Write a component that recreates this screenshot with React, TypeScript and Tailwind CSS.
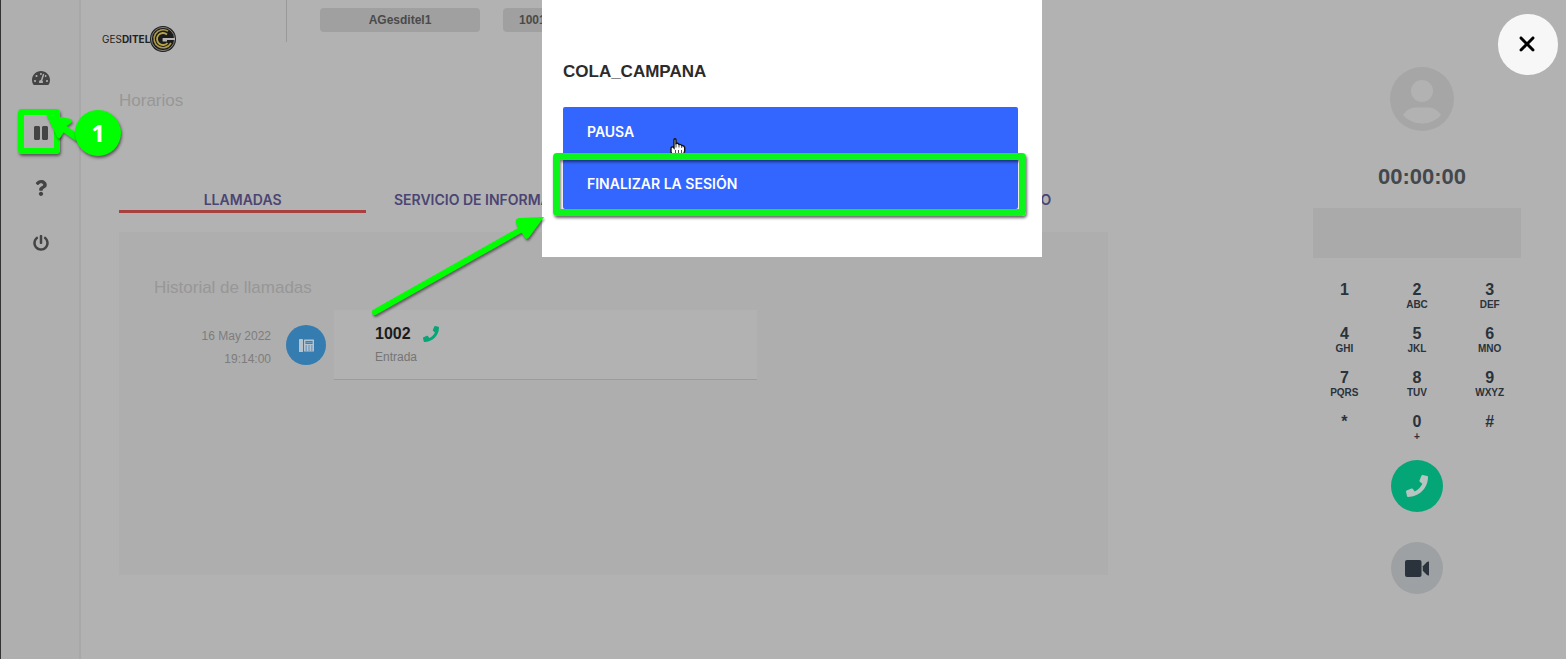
import React from 'react';
import { FaPause, FaPhone, FaPowerOff, FaQuestion, FaTachometerAlt } from 'react-icons/fa';
import { FaXmark } from 'react-icons/fa6';

const TABS = ['LLAMADAS', 'SERVICIO DE INFORMACIÓN', 'AGENDA', 'BUZÓN DE CORREO'];

const KEYS = [
  ['1', ''],
  ['2', 'ABC'],
  ['3', 'DEF'],
  ['4', 'GHI'],
  ['5', 'JKL'],
  ['6', 'MNO'],
  ['7', 'PQRS'],
  ['8', 'TUV'],
  ['9', 'WXYZ'],
  ['*', ''],
  ['0', '+'],
  ['#', ''],
];

const Logo: React.FC = () => (
  <a href="#" className="flex items-center text-[10px] text-[#222] font-['Inter',sans-serif]">
    <span>
      GES<b>DITEL</b>
    </span>
    <svg className="w-[26px] h-[26px]" viewBox="0 0 26 26" fill="none">
      <circle cx="13" cy="13" r="13" fill="#1c1c1c" />
      <circle cx="13" cy="13" r="11.600" stroke="#8d8d8d" strokeWidth="0.900" />
      <path d="M18 5.200A9 9 0 1 0 21 17" stroke="#ab9b45" strokeWidth="1.600" />
      <path d="M17 8.500A6 6 0 1 0 17.500 17" stroke="#b7a44a" strokeWidth="1.800" />
      <path d="M25 13H13.500V14.500H17" stroke="#b5b5b5" strokeWidth="1.800" />
    </svg>
  </a>
);

const FaxIcon: React.FC = () => (
  <svg className="w-[15px] h-[13px]" viewBox="0 0 15 13">
    <rect width="4" height="13" rx="0.500" fill="#b5c3cf" />
    <rect x="5" y="0.500" width="10" height="12" rx="0.500" fill="#b5c3cf" />
    <rect x="6.500" y="2" width="7" height="3" fill="#357cb0" />
    <rect x="7.200" y="2.800" width="5.600" height="1.400" fill="#6f9dc0" />
    <path
      d="M6.500 7h1.500M9.300 7h1.500M12 7h1.500M6.500 9h1.500M9.300 9h1.500M12 9h1.500M6.500 11h1.500M9.300 11h1.500M12 11h1.500"
      stroke="#357cb0"
      strokeWidth="0.900"
    />
  </svg>
);

const VideoIcon: React.FC = () => (
  <svg className="w-6 h-[17px]" viewBox="0 0 24 17" fill="#2a323b">
    <rect width="16.500" height="17" rx="2" />
    <path d="M17.800 6.300L21.500 2.400Q22.600 1.400 24 1.500V15.500Q22.600 15.600 21.500 14.600L17.800 10.700Z" />
  </svg>
);

const Avatar: React.FC = () => (
  <svg className="w-16 h-16" viewBox="0 0 64 64">
    <circle cx="32" cy="32" r="32" fill="#a6a6a6" />
    <circle cx="32" cy="24" r="11" fill="#b2b2b2" />
    <path
      d="M13 48C17 42 22 40.500 26 40.500H38C42 40.500 47 42 51 48C46 53.500 39.500 56.500 32 56.500C24.500 56.500 18 53.500 13 48Z"
      fill="#b2b2b2"
    />
  </svg>
);

const HandCursor: React.FC = () => (
  <svg className="absolute left-[128px] top-[138px] w-4 h-[17px]" viewBox="0 0 16 17">
    <path
      d="M4 10V2Q4 .8 5 .8T6 2V5.500Q8.500 4.800 9 6.500Q11 6 11.700 7.500Q14 7 14.700 9.500V13L13.500 16.500H2L1 14V10.500Q1.200 8.500 3 9Z"
      fill="#fff"
      stroke="#111"
      strokeWidth="1.400"
    />
    <path d="M6 5.500v4M9 6.500v3M11.700 7.500v2.500M5.500 12v3M8.500 12v3M11.500 12v3" stroke="#222" strokeWidth="0.800" />
  </svg>
);

const Sidebar: React.FC = () => (
  <nav className="relative flex flex-col items-center w-[81px] shrink-0 pt-[50px] pl-0.5 border-l border-l-[#333] border-r-2 border-r-[#a8a8a8] bg-[#afafaf] text-[#444]">
    <button aria-label="Panel" className="h-[55px]">
      <FaTachometerAlt size={18} />
    </button>
    <button aria-label="Pausa" className="h-[55px]">
      <FaPause size={16} />
    </button>
    <button aria-label="Ayuda" className="h-[55px]">
      <FaQuestion size={16} />
    </button>
    <button aria-label="Salir" className="h-[55px]">
      <FaPowerOff size={16} />
    </button>

    {/* Step marker */}
    <div className="absolute left-[17px] top-[109px] w-[42px] h-[45px] border-6 border-[#0f0] rounded-sm shadow-[1px_2px_3px_rgba(0,0,0,0.5)]" />
    <svg
      className="absolute left-[43px] top-[110px] w-10 h-9 drop-shadow-[1px_2px_1px_rgba(0,0,0,0.4)]"
      viewBox="0 0 40 36"
    >
      <path d="M2 4L27 9Q29 11 27 13Q23 15 21 19Q19 24 16 28Q14 29 13 27Z" fill="#0f0" />
      <path d="M18 17L32 27" stroke="#0f0" strokeWidth="7" strokeLinecap="round" />
    </svg>
    <div className="absolute left-[74px] top-[110px] z-10 flex items-center justify-center w-[46px] h-[46px] rounded-full bg-[#0f0] text-white text-2xl font-bold font-['Open_Sans',sans-serif] shadow-[1px_2px_3px_rgba(0,0,0,0.5)]">
      1
    </div>
  </nav>
);

const Dialer: React.FC = () => (
  <aside className="flex flex-col items-center w-[298px] shrink-0 pt-[67px] font-bold">
    <div className="flex flex-col items-center pl-2.5">
      <Avatar />
      <div className="mt-[30px] text-[22px] leading-8 text-[#44484c]">00:00:00</div>
    </div>
    <input aria-label="Número" className="mt-[15px] w-52 h-[50px] bg-[#aaa] px-3 outline-none" />
    <div className="grid grid-cols-3 w-[218px] mt-[21px] text-[#2a323b]">
      {KEYS.map(([digit, letters]) => (
        <button key={digit} className="flex flex-col items-center h-11">
          <span className="text-base leading-[22px]">{digit}</span>
          <span className="text-[10px] leading-2">{letters}</span>
        </button>
      ))}
    </div>
    <button
      aria-label="Llamar"
      className="flex items-center justify-center mt-[5px] w-[52px] h-[52px] rounded-full bg-[#04a677] text-[#b8c4c0]"
    >
      <FaPhone size={22} />
    </button>
    <button
      aria-label="Videollamada"
      className="flex items-center justify-center mt-[30px] w-[52px] h-[52px] rounded-full bg-[#9ea1a3]"
    >
      <VideoIcon />
    </button>
  </aside>
);

const CallHistory: React.FC = () => (
  <section className="mt-[19px] min-h-[343px] pt-11 px-[35px] bg-[#aeaeae]">
    <h2 className="text-[17px] leading-6 text-[#979797]">Historial de llamadas</h2>
    <div className="flex items-center mt-2.5">
      <div className="w-[117px] pt-1.5 text-right text-xs leading-[23px] text-[#7d7d7d]">
        <div>16 May 2022</div>
        <div>19:14:00</div>
      </div>
      <div className="flex items-center justify-center ml-[15px] w-10 h-10 rounded-full bg-[#357cb0]">
        <FaxIcon />
      </div>
      <div className="ml-2 w-[423px] h-[70px] pt-3 pl-[41px] border-b border-[#9c9c9c] bg-[#b2b2b2]">
        <div className="flex items-center gap-3 leading-6 font-bold text-[#1c1c1c]">
          1002
          <FaPhone size={16} className="text-[#04a677]" />
        </div>
        <div className="text-xs leading-[23px] text-[#757575]">Entrada</div>
      </div>
    </div>
  </section>
);

const QueueModal: React.FC = () => (
  <div className="absolute inset-x-0 top-0 z-20 flex justify-center pl-[18px] pointer-events-none">
    <div
      role="dialog"
      aria-label="COLA_CAMPANA"
      className="relative w-[500px] pt-[60px] pb-12 pl-[21px] pr-6 bg-white pointer-events-auto"
    >
      <h3 className="text-[17px] leading-6 font-bold text-[#2b2b2b]">COLA_CAMPANA</h3>
      <div className="flex flex-col gap-0.5 mt-[23px] text-sm font-semibold text-white font-['Inter',sans-serif]">
        <button className="h-[50px] px-6 text-left bg-[#36f] rounded-xs">PAUSA</button>
        <button className="h-[50px] px-6 text-left bg-[#36f] rounded-xs">FINALIZAR LA SESIÓN</button>
      </div>
      <HandCursor />

      {/* Highlight and arrow */}
      <div className="absolute left-[11px] top-[153px] w-[473px] h-[63px] border-[7px] border-[#0bf51a] rounded-sm shadow-[1px_2px_3px_rgba(0,0,0,0.6),inset_1px_2px_3px_rgba(0,0,0,0.5)]" />
      <svg
        className="absolute left-[-172px] top-[209px] w-[176px] h-[112px] drop-shadow-[1px_2px_1px_rgba(0,0,0,0.45)]"
        viewBox="0 0 176 112"
      >
        <path d="M5 103L154 19" stroke="#0f0" strokeWidth="6" strokeLinecap="round" />
        <path d="M172 9L158 28Q156 30 155 27Q153 23 150 21Q149 17 147 14Q146 10 149 10Z" fill="#0f0" stroke="#0f0" strokeWidth="2" />
      </svg>
    </div>
  </div>
);

const App: React.FC = () => {
  return (
    <div className="relative flex min-h-screen bg-[#b2b2b2] overflow-hidden font-['Liberation_Sans',Arial,sans-serif]">
      <Sidebar />

      <main className="flex-1 min-w-0">
        <header className="flex items-start h-[60px] pl-[21px]">
          <div className="w-[184px] pt-[26px]">
            <Logo />
          </div>
          <div className="w-px h-[42px] bg-[#999]" />
          <div className="flex gap-[23px] pt-2 pl-[33px] text-xs font-bold text-[#4a4a4a]">
            <div className="w-40 h-6 leading-6 rounded-sm bg-[#a0a0a0] text-center">AGesditel1</div>
            <div className="w-40 h-6 leading-6 pl-4 rounded-sm bg-[#a0a0a0]">1001</div>
          </div>
        </header>

        <div className="pl-[38px] pr-[160px]">
          <h1 className="pt-[29px] text-[17px] leading-6 text-[#979797]">Horarios</h1>
          <div
            role="tablist"
            className="grid grid-cols-4 mt-[52px] text-sm font-semibold text-[#4b4573] font-['Inter',sans-serif]"
          >
            {TABS.map((tab, i) => (
              <button
                key={tab}
                role="tab"
                aria-selected={i === 0}
                className={`h-12 pt-6 border-b-3 whitespace-nowrap ${i === 0 ? 'border-[#a8403f]' : 'border-transparent'}`}
              >
                {tab}
              </button>
            ))}
          </div>
          <CallHistory />
        </div>
      </main>

      <Dialer />
      <QueueModal />

      <button
        aria-label="Cerrar"
        className="absolute top-3.5 right-2 z-20 flex items-center justify-center w-[60px] h-[61px] pb-0.5 pr-0.5 rounded-full bg-[#f7f7f7] text-black"
      >
        <FaXmark size={24} />
      </button>
    </div>
  );
};

export default App;
